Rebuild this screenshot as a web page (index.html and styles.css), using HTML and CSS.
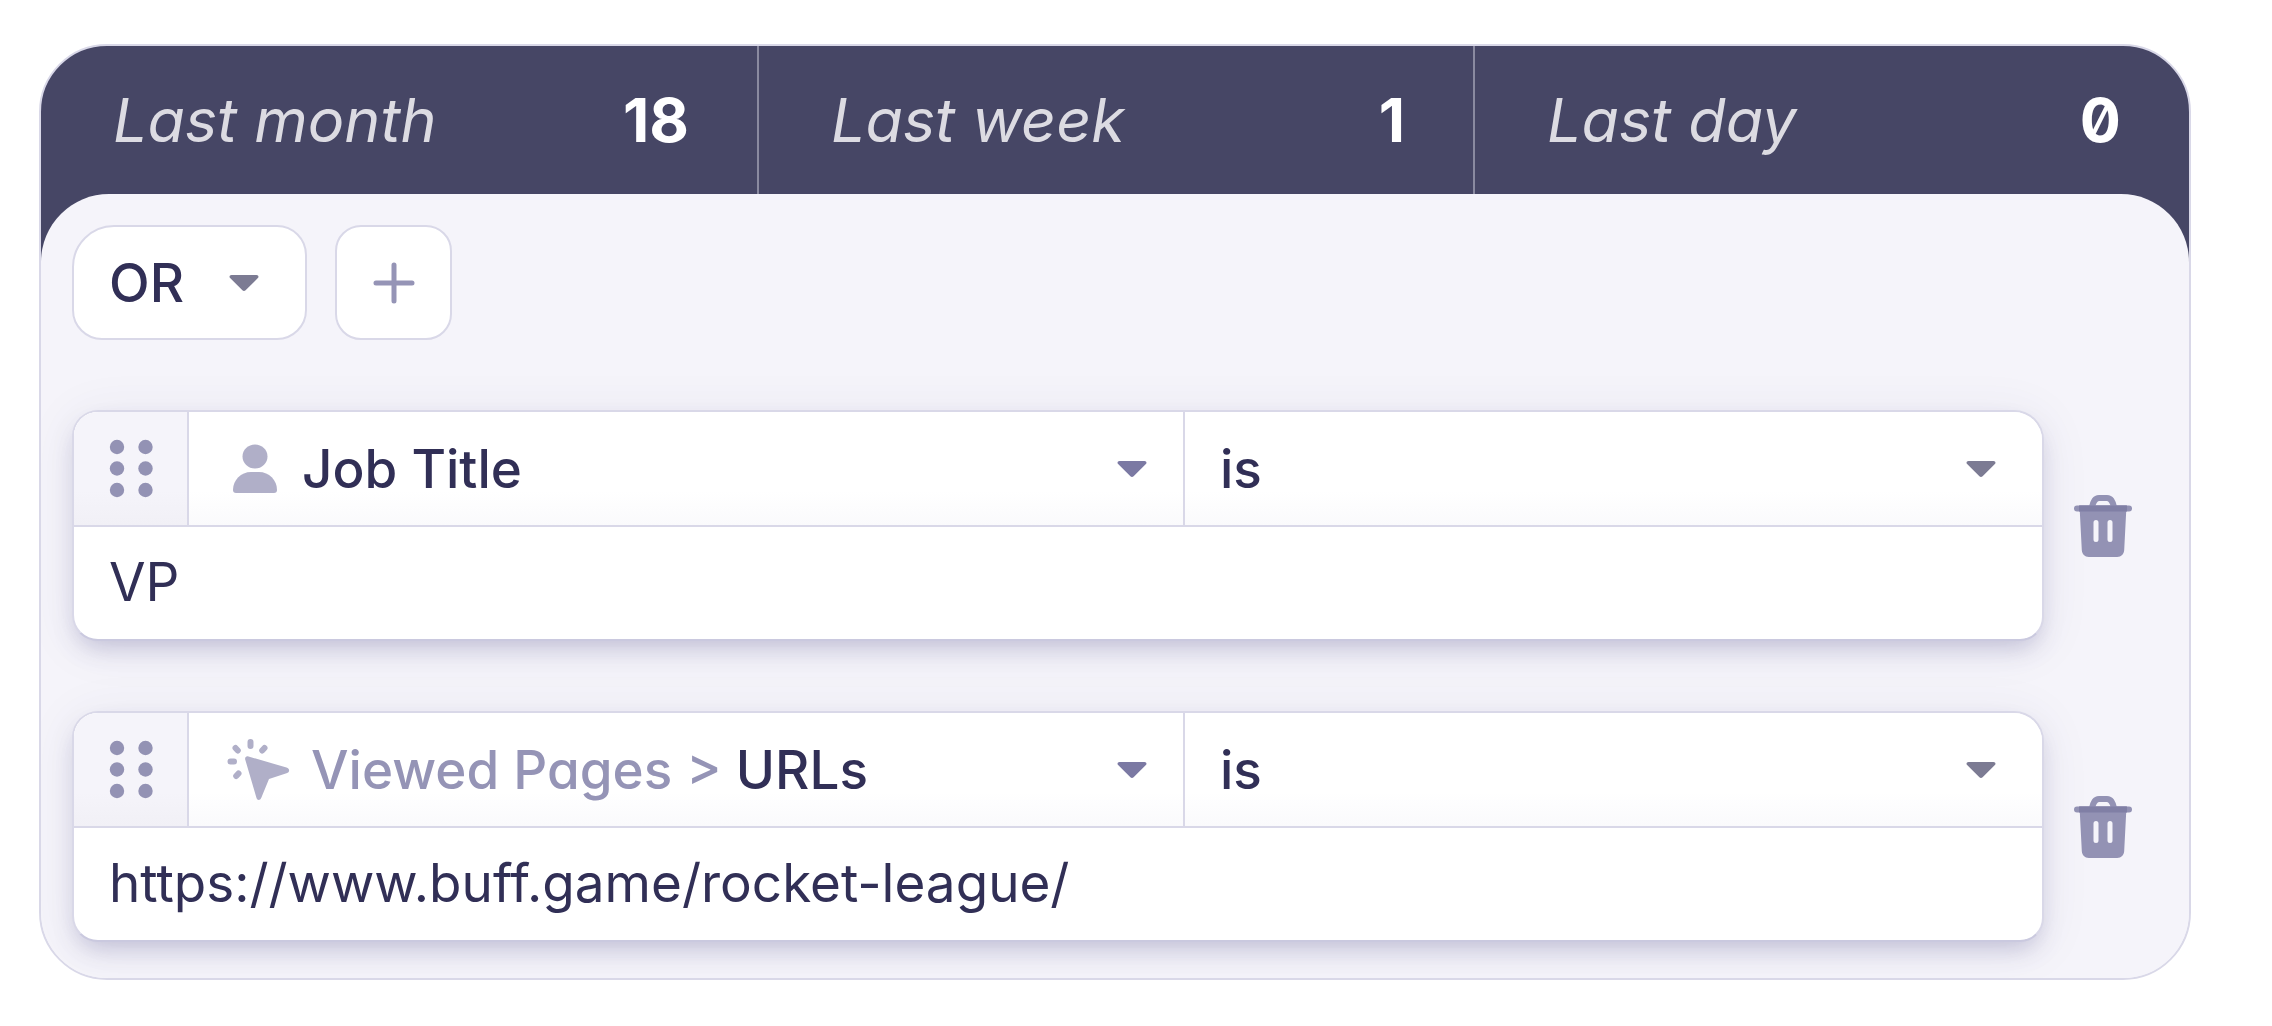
FILE: index.html
```html
<!DOCTYPE html>
<html lang="en">
<head>
<meta charset="utf-8">
<meta name="viewport" content="width=device-width, initial-scale=1">
<title>Segment conditions</title>
<link rel="stylesheet" href="styles.css">
</head>
<body>
<svg class="sprite" aria-hidden="true">
  <symbol id="caret" viewBox="0 0 30 18"><path d="M2.500 1h25c1.800 0 2.600 1.800 1.400 3L16.600 16.300c-.9.9-2.300.9-3.200 0L1.100 4C-.1 2.800.7 1 2.500 1z"/></symbol>
  <symbol id="grip" viewBox="0 0 44 60"><circle cx="8" cy="8" r="7.200"/><circle cx="36.500" cy="8" r="7.200"/><circle cx="8" cy="29.500" r="7.200"/><circle cx="36.500" cy="29.500" r="7.200"/><circle cx="8" cy="51" r="7.200"/><circle cx="36.500" cy="51" r="7.200"/></symbol>
  <symbol id="trash" viewBox="0 0 58 62"><path d="M5.500 10.500h47l-2.300 44.500c-.2 4-3 7-7 7H14.800c-4 0-6.800-3-7-7zM22 25a2.500 2.500 0 0 0-2.500 2.500v17a2.500 2.500 0 0 0 5 0v-17A2.500 2.500 0 0 0 22 25zm14 0a2.500 2.500 0 0 0-2.500 2.500v17a2.500 2.500 0 0 0 5 0v-17A2.500 2.500 0 0 0 36 25z" fill="#9392b4" fill-rule="evenodd"/><path d="M18 12c1.500-6 3-9 7-9h8c4 0 5.500 3 7 9" fill="none" stroke="#9392b4" stroke-width="6"/><rect x="0" y="10.500" width="58" height="6" rx="3" fill="#9392b4"/><rect x="5" y="10.500" width="48" height="6" fill="#807fa5"/></symbol>
</svg>
<main class="panel">
  <dl class="stats">
    <div class="stat"><dt>Last month</dt><dd>18</dd></div>
    <div class="stat"><dt>Last week</dt><dd>1</dd></div>
    <div class="stat"><dt>Last day</dt><dd>0</dd></div>
  </dl>
  <section class="builder">
    <div class="toolbar">
      <div class="picker picker-join">
        <select class="picker-select" aria-label="Join conditions with"><option>OR</option><option>AND</option></select>
        <svg class="caret"><use href="#caret"/></svg>
      </div>
      <button class="add" type="button" aria-label="Add condition"><svg class="plus" viewBox="0 0 42 42"><path d="M21 3v36M3 21h36"/></svg></button>
    </div>
    <div class="condition">
      <div class="card">
        <div class="rule">
          <button class="grip" type="button" aria-label="Reorder condition"><svg class="grip-icon"><use href="#grip"/></svg></button>
          <button class="field field-person" type="button">
            <svg class="person" viewBox="0 0 46 50"><ellipse cx="23" cy="12.500" rx="12.500" ry="12"/><path d="M1 46C1 36 9 28 19 28h8c10 0 18 8 18 18 0 2-1 3-3 3H4c-2 0-3-1-3-3z"/></svg>
            <span class="field-name">Job Title</span>
            <svg class="caret caret-violet"><use href="#caret"/></svg>
          </button>
          <div class="picker picker-operator">
            <select class="picker-select" aria-label="Job title operator"><option>is</option><option>is not</option></select>
            <svg class="caret"><use href="#caret"/></svg>
          </div>
        </div>
        <input class="value" type="text" value="VP" aria-label="Job title value">
      </div>
      <button class="remove" type="button" aria-label="Delete condition"><svg class="trash"><use href="#trash"/></svg></button>
    </div>
    <div class="condition">
      <div class="card">
        <div class="rule">
          <button class="grip" type="button" aria-label="Reorder condition"><svg class="grip-icon"><use href="#grip"/></svg></button>
          <button class="field" type="button">
            <svg class="pointer" viewBox="0 0 64 64"><path d="M21.500 18.500l38 11c3.500 1.200 3.500 4.700 0 5.800L42 41l-7.800 19c-1 2.500-4 2.500-4.700 0L18.200 21.500c-.6-2.200 1.200-3.700 3.300-3z"/><path class="rays" d="M23.500 4v4M37.500 10l-2.300 2.500M8.500 10l2.300 2.500M3.500 23.500H7M11.500 35.500l-2.300 2.500"/></svg>
            <span class="field-name"><span class="field-group">Viewed Pages &gt;</span> URLs</span>
            <svg class="caret caret-violet"><use href="#caret"/></svg>
          </button>
          <div class="picker picker-operator">
            <select class="picker-select" aria-label="URL operator"><option>is</option><option>is not</option></select>
            <svg class="caret"><use href="#caret"/></svg>
          </div>
        </div>
        <input class="value" type="text" value="https://www.buff.game/rocket-league/" aria-label="URL value">
      </div>
      <button class="remove" type="button" aria-label="Delete condition"><svg class="trash"><use href="#trash"/></svg></button>
    </div>
  </section>
</main>
</body>
</html>
```
FILE: styles.css
```css
* { box-sizing: border-box; }

:root {
  --ink: #312f56;
  --navy: #464665;
  --muted: #9594b6;
  --line: #d9d8e8;
  --wash: #f5f4fa;
}

body {
  margin: 0;
  padding: 44px 81px 44px 39px;
  background: #fff;
  color: var(--ink);
  font-family: Inter, "Liberation Sans", sans-serif;
  font-size: 53px;
  line-height: 64px;
}

button, select, input {
  margin: 0;
  padding: 0;
  border: 0;
  border-radius: 0;
  background: none;
  color: inherit;
  font: inherit;
}

svg { display: block; flex: none; }

.sprite { position: absolute; width: 0; height: 0; }

.panel {
  overflow: hidden;
  border: 2px solid var(--line);
  border-radius: 68px;
  background: linear-gradient(var(--navy) 300px, var(--wash) 300px);
}

.stats {
  display: grid;
  grid-template-columns: repeat(3, 1fr);
  margin: 0;
}

.stat {
  display: flex;
  align-items: center;
  justify-content: space-between;
  height: 148px;
  padding: 0 68px 0 72px;
  font-size: 61px;
}

.stat + .stat { border-left: 2px solid #8a8aa0; }

.stat dt {
  color: #dcdbe2;
  font-style: italic;
  font-feature-settings: "cv11";
}

.stat dd {
  margin: 0;
  color: #fff;
  font-weight: 700;
  font-feature-settings: "zero";
}

.builder {
  display: flex;
  flex-direction: column;
  gap: 70px;
  padding: 31px 31px 36px;
  border-radius: 68px 68px 0 0;
  background: var(--wash);
}

.toolbar { display: flex; gap: 28px; }

.picker { display: grid; align-items: center; font-weight: 500; }

.picker > * { grid-area: 1 / 1; }

.picker .caret { justify-self: end; pointer-events: none; }

.picker-select {
  appearance: none;
  width: 100%;
  height: 100%;
  padding-left: 35px;
}

.picker-join {
  width: 235px;
  height: 115px;
  border: 2px solid var(--line);
  border-radius: 42px 30px 30px 30px;
  background: #fff;
}

.picker-join .caret { margin-right: 46px; }

.caret { width: 30px; height: 18px; fill: #7c7b93; }

.caret-violet { fill: #7b79a3; }

.add {
  display: grid;
  place-items: center;
  width: 117px;
  height: 115px;
  border: 2px solid var(--line);
  border-radius: 26px;
  background: #fff;
}

.plus {
  width: 42px;
  height: 42px;
  fill: none;
  stroke: var(--muted);
  stroke-width: 5;
  stroke-linecap: round;
}

.condition { display: flex; align-items: center; gap: 30px; }

.card {
  flex: 1;
  overflow: hidden;
  border: 2px solid var(--line);
  border-bottom-color: #cac9df;
  border-radius: 26px 30px 24px 26px;
  background: #fff;
  box-shadow: 0 12px 24px -6px rgba(70, 66, 130, .26), 0 6px 50px rgba(70, 70, 120, .08);
}

.rule {
  display: grid;
  grid-template-columns: 115px 996fr 857fr;
  height: 115px;
  border-bottom: 2px solid var(--line);
  background: linear-gradient(#fff 70%, #fafafc);
}

.grip {
  display: grid;
  place-items: center;
  border-right: 2px solid var(--line);
  background: linear-gradient(var(--wash) 70%, #f1f0f6);
}

.grip-icon { width: 44px; height: 60px; fill: #9392b4; }

.field {
  display: flex;
  align-items: center;
  gap: 20px;
  padding: 0 36px 0 38px;
  border-right: 2px solid var(--line);
  font-weight: 500;
  text-align: left;
}

.field-person { gap: 24px; padding-left: 43px; }

.field-name { flex: 1; font-feature-settings: "cv11"; white-space: nowrap; }

.field-group { color: var(--muted); }

.person { width: 46px; height: 50px; fill: #b0afc8; }

.pointer { width: 64px; height: 64px; fill: #b0afc8; }

.rays { fill: none; stroke: #b0afc8; stroke-width: 6; stroke-linecap: round; }

.picker-operator .caret { margin-right: 46px; }

.value {
  display: block;
  width: 100%;
  height: 112px;
  padding: 0 35px 2px;
}

.trash { width: 58px; height: 62px; }

.remove { margin-right: 26px; }
```
